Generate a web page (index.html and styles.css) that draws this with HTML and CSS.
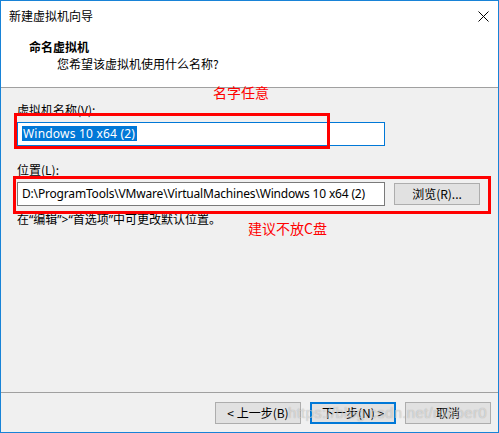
FILE: index.html
```html
<!DOCTYPE html>
<html lang="zh-CN">
<head>
<meta charset="utf-8">
<title>新建虚拟机向导</title>
<link rel="stylesheet" href="styles.css">
</head>
<body>
<div class="window">
  <div class="titlebar">
    <span class="title">新建虚拟机向导</span>
    <svg class="close" width="11" height="11" viewBox="0 0 11 11"><path d="M0.5 0.5 L10.5 10.5 M10.5 0.5 L0.5 10.5" stroke="#000" stroke-width="1" fill="none"/></svg>
  </div>
  <div class="header">
    <div class="heading">命名虚拟机</div>
    <div class="subtitle">您希望该虚拟机使用什么名称?</div>
  </div>
  <div class="content">
    <div class="label">虚拟机名称(V):</div>
    <div class="textbox focused"><span class="selected">Windows 10 x64 (2)</span></div>
    <div class="label label-gap">位置(L):</div>
    <div class="row">
      <div class="textbox path">D:\ProgramTools\VMware\VirtualMachines\Windows 10 x64 (2)</div>
      <div class="button browse">浏览(R)...</div>
    </div>
    <div class="hint">在“编辑”&gt;“首选项”中可更改默认位置。</div>
  </div>
  <div class="footer">
    <div class="button">&lt; 上一步(B)</div>
    <div class="button default">下一步(N) &gt;</div>
    <div class="button">取消</div>
  </div>

  <div class="mark mark-name"></div>
  <div class="mark mark-path"></div>
  <div class="note note-name">名字任意</div>
  <div class="note note-path">建议不放C盘</div>
  <div class="watermark">https://blog.csdn.net/rubber0</div>
</div>
</body>
</html>
```
FILE: styles.css
```css
* { box-sizing: border-box; }
html, body { margin: 0; padding: 0; background: #fff; }
body {
  font-family: "Noto Sans CJK SC", "Noto Sans", sans-serif;
  font-size: 12px;
  color: #000;
}
.window {
  position: relative;
  width: 499px;
  height: 433px;
  border: 1px solid #1883d7;
  background: #f0f0f0;
  display: flex;
  flex-direction: column;
  overflow: hidden;
}
.titlebar {
  height: 29px;
  background: #fff;
  display: flex;
  align-items: center;
  justify-content: space-between;
  padding: 0 9px 0 8px;
}
.title { font-size: 12px; line-height: 16px; }
.close { display: block; margin-top: 1px; }
.header {
  height: 58px;
  background: #fff;
  border-bottom: 1px solid #a0a0a0;
  padding: 9px 0 0 28px;
}
.heading { font-weight: bold; line-height: 16px; }
.subtitle { line-height: 16px; padding-left: 28px; margin-top: 1px; }
.content {
  flex: 1;
  padding: 14px 0 0 16px;
}
.label { line-height: 16px; }
.label-gap { margin-top: 16px; }
.textbox {
  width: 368px;
  height: 24px;
  margin-top: 4px;
  background: #fff;
  border: 1px solid #7a7a7a;
  font-family: "Noto Sans", "Noto Sans CJK SC", sans-serif;
  font-size: 12px;
  line-height: 22px;
  padding-left: 4px;
  white-space: nowrap;
  overflow: hidden;
}
.textbox.path { letter-spacing: -0.18px; }
.textbox.focused { border-color: #0078d7; }
.selected {
  background: #0078d7;
  color: #fff;
  display: inline-block;
  line-height: 15px;
  padding: 0 2px 0 1px;
  letter-spacing: 0.2px;
}
.row { display: flex; align-items: flex-start; }
.button {
  width: 86px;
  height: 22px;
  background: #e1e1e1;
  border: 1px solid #adadad;
  display: flex;
  align-items: center;
  justify-content: center;
  line-height: 16px;
}
.browse { margin: 5px 0 0 9px; height: 22px; }
.hint {
  margin-top: 6px;
  line-height: 16px;
  font-family: "Noto Sans", "Noto Sans CJK SC", sans-serif;
}
.footer {
  height: 40px;
  border-top: 1px solid #a0a0a0;
  display: flex;
  justify-content: flex-end;
  gap: 9px;
  padding: 9px 7px 0 0;
}
.button.default { border: 2px solid #0078d7; width: 86px; }
.mark {
  position: absolute;
  border: 3px solid #ff0000;
}
.mark-name { left: 13px; top: 112px; width: 316px; height: 36px; }
.mark-path { left: 12px; top: 175px; width: 478px; height: 38px; }
.note {
  position: absolute;
  color: #ff0000;
  font-size: 14px;
  line-height: 18px;
}
.note-name { left: 212px; top: 82px; }
.note-path { left: 247px; top: 218px; }
.watermark {
  position: absolute;
  left: 287px;
  top: 403px;
  font-family: "Liberation Sans", sans-serif;
  font-size: 15px;
  line-height: 18px;
  color: rgba(255, 255, 255, 0.5);
  text-shadow: 0 0 1px rgba(0, 0, 0, 0.3);
  letter-spacing: 0.3px;
  pointer-events: none;
}
```
